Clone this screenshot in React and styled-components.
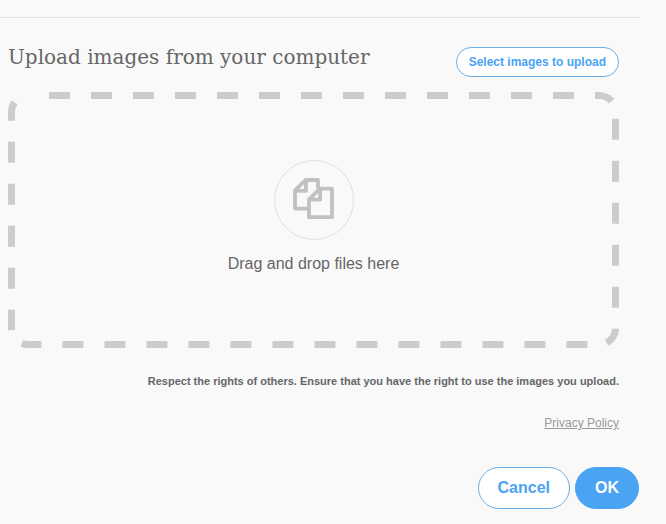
import styled, { createGlobalStyle } from 'styled-components';

function App() {
  return (
    <>
      <GlobalStyles />
      <Page>
        <Divider />
        <Content>
          <Header>
            <Title>Upload images from your computer</Title>
            <SelectButton type="button">Select images to upload</SelectButton>
          </Header>
          <DropZone>
            <DashedOutline aria-hidden="true">
              <rect width="100%" height="100%" rx="20" />
            </DashedOutline>
            <IconCircle>
              <FilesIcon />
            </IconCircle>
            <DropText>Drag and drop files here</DropText>
          </DropZone>
          <Notice>
            Respect the rights of others. Ensure that you have the right to use
            the images you upload.
          </Notice>
          <PolicyRow>
            <PolicyLink href="#privacy">Privacy Policy</PolicyLink>
          </PolicyRow>
        </Content>
        <Actions>
          <ActionButton type="button">Cancel</ActionButton>
          <ActionButton type="button" $primary>
            OK
          </ActionButton>
        </Actions>
      </Page>
    </>
  );
}

const FilesIcon = () => (
  <svg
    width="42"
    height="44"
    viewBox="0 0 42 44"
    fill="none"
    stroke="#c1c1c1"
    strokeWidth="3.8"
    strokeLinejoin="round"
    aria-hidden="true"
  >
    <path d="M15.5 30.6H2V12.4L12.6 2H25V10.6" />
    <path d="M13 2.4V12.8H2.4" />
    <path d="M27 10.6H39V39.2H16V21.4Z" />
    <path d="M27.2 10.8V21.6H16.4" />
  </svg>
);

const GlobalStyles = createGlobalStyle`
  * {
    box-sizing: border-box;
  }
  body {
    margin: 0;
    background: #f9f9f9;
    color: #666;
    font-family: 'Liberation Sans', Arial, sans-serif;
  }
`;

const Page = styled.main`
  padding: 17px 27px 15px 0;
`;

const Divider = styled.hr`
  margin: 0;
  border: 0;
  border-top: 1px solid #e2e2e2;
`;

const Content = styled.section`
  padding: 29px 20px 0 8px;
`;

const Header = styled.header`
  display: flex;
  justify-content: space-between;
  align-items: flex-start;
  margin-bottom: 15px;
`;

const Title = styled.h1`
  margin: 0;
  font-family: 'DejaVu Serif', serif;
  font-size: 20px;
  font-weight: 400;
  line-height: 20px;
`;

const PillButton = styled.button`
  border: 1px solid #6aaee6;
  background: #fff;
  color: #4aa3f3;
  font-family: inherit;
  font-weight: 700;
  white-space: nowrap;
  cursor: pointer;
`;

const SelectButton = styled(PillButton)`
  height: 30px;
  padding: 0 12px;
  border-radius: 15px;
  font-size: 12px;
`;

const ActionButton = styled(PillButton)`
  height: 42px;
  padding: 0 19px;
  border-radius: 21px;
  font-size: 16px;
  ${({ $primary }) =>
    $primary &&
    `
    border-color: #4aa3f3;
    background: #4aa3f3;
    color: #fff;
  `}
`;

const DropZone = styled.div`
  position: relative;
  display: flex;
  flex-direction: column;
  align-items: center;
  min-height: 256px;
  padding-top: 68px;
`;

/* the stroke runs along the outer edge, so only its inner half is visible */
const DashedOutline = styled.svg`
  position: absolute;
  inset: 0;
  width: 100%;
  height: 100%;
  border-radius: 20px;
  overflow: hidden;
  fill: none;
  stroke: #ccc;
  stroke-width: 14px;
  stroke-dasharray: 21;
  stroke-dashoffset: 21;
`;

const IconCircle = styled.div`
  display: flex;
  justify-content: center;
  align-items: center;
  width: 80px;
  height: 80px;
  border: 1px solid #e0e0e0;
  border-radius: 50%;
`;

const DropText = styled.p`
  margin: 14px 0 0;
  font-size: 16px;
  line-height: 20px;
`;

const Notice = styled.p`
  margin: 26px 0 0;
  font-size: 11px;
  font-weight: 700;
  line-height: 14px;
  text-align: right;
`;

const PolicyRow = styled.div`
  display: flex;
  justify-content: flex-end;
  margin-top: 26px;
`;

const PolicyLink = styled.a`
  color: #999;
  font-size: 12px;
  line-height: 18px;
`;

const Actions = styled.footer`
  display: flex;
  justify-content: flex-end;
  gap: 5px;
  margin-top: 35px;
`;

export default App;
